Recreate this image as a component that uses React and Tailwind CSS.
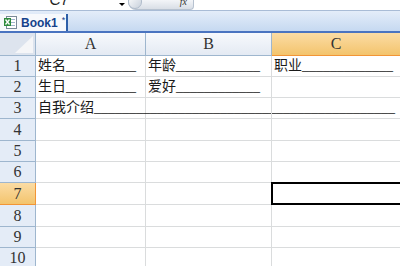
const rowHeights = [21, 21, 21, 22, 21, 21, 22, 22, 21, 20]

const cells = {
  1: ['姓名' + '_'.repeat(10), '年龄' + '_'.repeat(12), '职业' + '_'.repeat(13)],
  2: ['生日' + '_'.repeat(10), '爱好' + '_'.repeat(12), ''],
  3: ['自我介绍' + '_'.repeat(43), '', ''],
}

function SheetIcon() {
  return (
    <svg width="13" height="13" viewBox="0 0 13 13">
      <rect x="2.5" y="0.5" width="10" height="12" fill="#fff" stroke="#7a8a99" />
      <rect x="5" y="3" width="6" height="1" fill="#9fb5cc" />
      <rect x="5" y="6" width="6" height="1" fill="#9fb5cc" />
      <rect x="5" y="9" width="6" height="1" fill="#9fb5cc" />
      <rect x="0" y="2" width="7" height="8" fill="#2e8b3e" />
      <path d="M1.5 3.5 L5.5 8.5 M5.5 3.5 L1.5 8.5" stroke="#fff" strokeWidth="1.3" />
    </svg>
  )
}

function App() {
  return (
    <div className="w-[400px] h-[266px] overflow-hidden bg-white" style={{ fontFamily: '"Liberation Serif", "Noto Sans CJK SC", serif' }}>
      {/* formula bar, cut off at top */}
      <div className="h-[11px] overflow-hidden border-b border-[#a9bcd6] flex items-end">
        <div className="w-[128px] flex items-end justify-center relative h-full">
          <span className="text-[15px] leading-none text-[#222] mb-[3px] ml-[-10px]" style={{ fontFamily: '"Liberation Sans", sans-serif' }}>C7</span>
          <span className="absolute left-[119px] top-[3px] w-0 h-0 border-l-[3px] border-r-[3px] border-t-[3px] border-l-transparent border-r-transparent border-t-black"></span>
        </div>
        <div className="w-[66px] h-[10px] mb-0 rounded-bl-[8px] rounded-br-[4px] bg-gradient-to-b from-[#f3f5f8] to-[#d9dee6] border border-t-0 border-[#b7c2d0] flex items-end justify-end pr-[6px] relative">
          <span className="absolute left-[-1px] top-[-6px] w-[14px] h-[15px] rounded-full bg-gradient-to-br from-white to-[#c9d1dc] border border-[#b0bccb]"></span>
          <span className="text-[10px] italic leading-none text-[#333] mb-[2px]">fx</span>
        </div>
        <div className="flex-1"></div>
      </div>

      {/* sheet tabs */}
      <div className="h-[20px] bg-gradient-to-b from-[#e4edf9] to-[#c6d9f1] flex items-end">
        <div className="h-[17px] w-[68px] bg-[#f7f9fc] border-r-2 border-[#2e5fa8] flex items-center pl-[4px] gap-[4px]">
          <SheetIcon />
          <span className="text-[12px] font-bold text-[#15428b] leading-none" style={{ fontFamily: '"Liberation Sans", sans-serif' }}>Book1</span>
          <span className="text-[9px] text-[#15428b] leading-none mb-[4px]" style={{ fontFamily: '"Liberation Sans", sans-serif' }}>*</span>
        </div>
      </div>
      <div className="h-[2px] bg-[#4a74c0]"></div>

      {/* column headers */}
      <div className="flex h-[23px] text-[16px] text-[#333]">
        <div className="w-[36px] shrink-0 border-r border-b border-[#9eb6ce] bg-[#dde4ee] flex items-end justify-end pr-[2px] pb-[2px]">
          <svg width="18" height="17" viewBox="0 0 18 17">
            <polygon points="18,0 18,17 0,17" fill="#f5f6f8" />
          </svg>
        </div>
        <div className="w-[110px] shrink-0 border-r border-b border-[#9eb6ce] bg-gradient-to-b from-[#f7f9fc] to-[#e4eaf3] flex items-center justify-center">A</div>
        <div className="w-[126px] shrink-0 border-r border-b border-[#9eb6ce] bg-gradient-to-b from-[#f7f9fc] to-[#e4eaf3] flex items-center justify-center">B</div>
        <div className="flex-1 border-b border-[#f29536] bg-gradient-to-b from-[#fbdca4] to-[#f3c46c] flex items-center justify-center">C</div>
      </div>

      {/* rows */}
      {rowHeights.map((h, i) => {
        const n = i + 1
        const sel = n === 7
        const row = cells[n] || ['', '', '']
        return (
          <div key={n} className="flex" style={{ height: h }}>
            <div className={sel
              ? 'w-[36px] shrink-0 border-r border-b border-[#f29536] bg-gradient-to-b from-[#fbdca4] to-[#f3c46c] flex items-center justify-center text-[16px] text-[#333]'
              : 'w-[36px] shrink-0 border-r border-b border-[#9eb6ce] bg-[#e4ecf7] flex items-center justify-center text-[16px] text-[#333]'}>
              {n}
            </div>
            <div className="w-[110px] shrink-0 border-r border-b border-[#dadcdd] relative">
              <span className="absolute left-[2px] bottom-[1px] whitespace-nowrap text-[14px] leading-[18px] text-[#1a1a1a]">{row[0]}</span>
            </div>
            <div className="w-[126px] shrink-0 border-r border-b border-[#dadcdd] relative">
              <span className="absolute left-[2px] bottom-[1px] whitespace-nowrap text-[14px] leading-[18px] text-[#1a1a1a]">{row[1]}</span>
            </div>
            <div className="flex-1 border-b border-[#dadcdd] relative">
              <span className="absolute left-[2px] bottom-[1px] whitespace-nowrap text-[14px] leading-[18px] text-[#1a1a1a]">{row[2]}</span>
              {sel && <div className="absolute left-[-1px] top-[-1px] right-[-2px] bottom-[-1px] border-2 border-black"></div>}
            </div>
          </div>
        )
      })}
    </div>
  )
}

export default App
